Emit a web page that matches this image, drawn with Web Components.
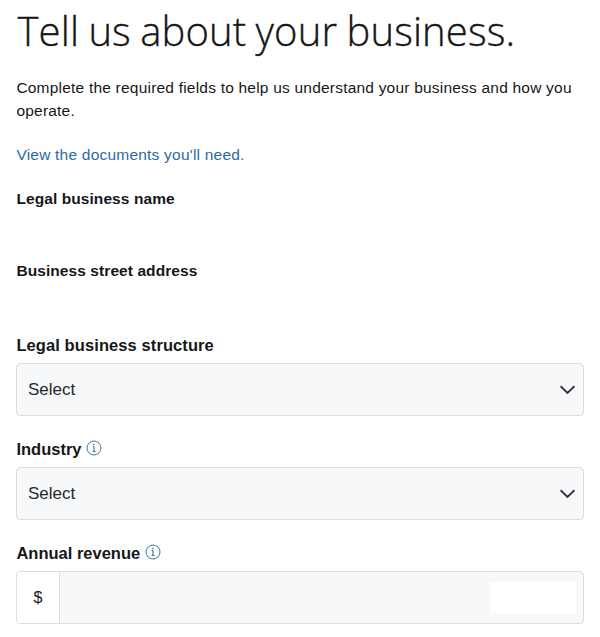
<!DOCTYPE html>
<html lang="en">
<head>
<meta charset="utf-8">
<title>Tell us about your business</title>
<style>
body { margin: 0; background: #fff; color: #161719; font-family: "Liberation Sans", Arial, sans-serif; }
</style>
</head>
<body>
<business-form>
  <form-intro>
    <span slot="title">Tell us about your business.</span>
    <span slot="text">Complete the required fields to help us understand your business and how you operate.</span>
    <span slot="link">View the documents you'll need.</span>
  </form-intro>
  <form-field style="--field-height:72px" compact>Legal business name</form-field>
  <form-field style="--field-height:74px" compact>Business street address</form-field>
  <form-field style="--track:.09px">Legal business structure<select-box slot="control">Select</select-box></form-field>
  <form-field>Industry<info-icon slot="info"></info-icon><select-box slot="control">Select</select-box></form-field>
  <form-field>Annual revenue<info-icon slot="info"></info-icon><money-input slot="control">$</money-input></form-field>
</business-form>
<script>
const define = (name, markup) => customElements.define(name, class extends HTMLElement {
  constructor() {
    super();
    this.attachShadow({ mode: 'open' }).innerHTML = markup;
  }
});

define('business-form', `
<style>
  :host { display: flex; flex-direction: column; box-sizing: border-box; width: 600px; height: 637px; padding: 4px 16px 0; overflow: hidden; }
</style><slot></slot>`);

define('form-intro', `
<style>
  :host { display: block; flex: none; height: 183px; }
  h1 { margin: 0 0 0 1.5px; font: 300 40px/54px "Open Sans", sans-serif; letter-spacing: .13px; word-spacing: -1.2px; -webkit-text-stroke: .35px #161616; white-space: nowrap; color: #161616; }
  p { margin: 18px 0 0 .4px; font-size: 15.5px; line-height: 23px; letter-spacing: .21px; }
  a { display: block; margin: 21px 0 0 .4px; font-size: 15.5px; line-height: 23px; letter-spacing: .215px; color: #2b6aa8; text-decoration: none; }
</style>
<h1><slot name="title"></slot></h1>
<p><slot name="text"></slot></p>
<a><slot name="link"></slot></a>`);

define('form-field', `
<style>
  :host { display: block; flex: none; height: var(--field-height, 104px); }
  .label { display: flex; align-items: center; height: 24px; padding-left: .4px; font-weight: 700; font-size: 16.5px; letter-spacing: var(--track, 0); gap: 5px; white-space: nowrap; }
  :host([compact]) .label { font-size: 15.5px; letter-spacing: .08px; }
  .control { margin-top: 6px; }
</style>
<div class="label"><span><slot></slot></span><slot name="info"></slot></div>
<div class="control"><slot name="control"></slot></div>`);

define('info-icon', `
<style>:host { display: block; width: 16px; height: 16px; margin-top: -3px; } svg { display: block; }</style>
<svg width="16" height="16" viewBox="0 0 16 16" fill="none" stroke="#3e74a8">
  <circle cx="8" cy="8" r="7"/>
  <path d="M6.8 6.6H8V11.3M6.7 11.4H9.4" stroke="#2460a0" stroke-width="1"/>
  <circle cx="7.9" cy="4.5" r=".8" fill="#2460a0" stroke="none"/>
</svg>`);

define('select-box', `
<style>
  :host { display: flex; align-items: center; justify-content: space-between; box-sizing: border-box; height: 53px; padding: 0 8px 0 11px; border: 1px solid #dcdde1; border-radius: 4px; background: #f7f8fa; font-size: 17px; color: #27282b; }
</style>
<span><slot></slot></span>
<svg width="16" height="10" viewBox="0 0 16 10" fill="none" stroke="#333539" stroke-width="1.9"><path d="M1.6 1.2L8.5 8L15.4 1.2"/></svg>`);

define('money-input', `
<style>
  :host { display: flex; box-sizing: border-box; height: 53px; border: 1px solid #dcdde1; border-radius: 4px; background: #f7f8fa; overflow: hidden; }
  .unit { display: flex; align-items: center; justify-content: center; width: 42px; border-right: 1px solid #dcdde1; background: #fff; font-size: 16px; }
  .value { flex: 1; display: flex; align-items: center; justify-content: flex-end; padding-right: 7px; }
  .blank { width: 86px; height: 31px; background: #fff; }
</style>
<div class="unit"><slot></slot></div>
<div class="value"><div class="blank"></div></div>`);
</script>
</body>
</html>
